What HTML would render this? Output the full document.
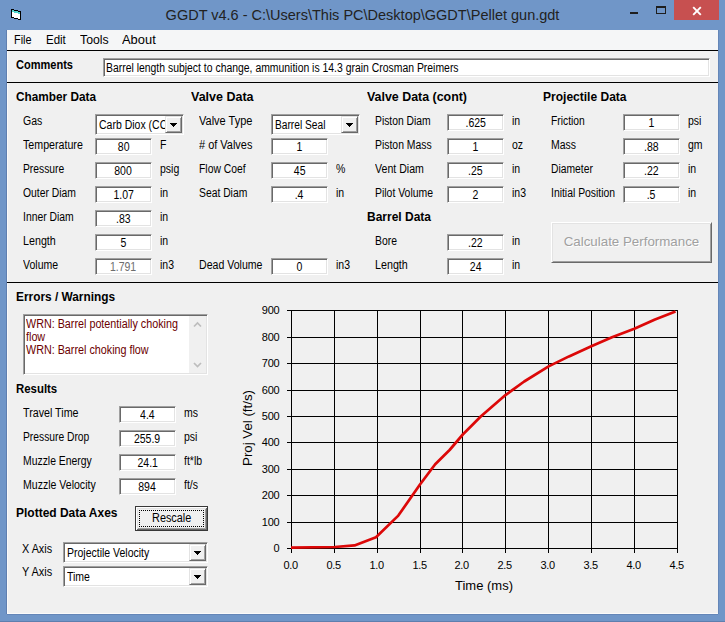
<!DOCTYPE html><html><head><meta charset='utf-8'><title>GGDT v4.6</title><style>
html,body{margin:0;padding:0;}
body{width:725px;height:622px;overflow:hidden;background:#7096c8;position:relative;font-family:"Liberation Sans",sans-serif;font-size:12px;color:#000;}
div,span,i{box-sizing:border-box;}
.a{position:absolute;white-space:nowrap;line-height:14px;transform-origin:0 50%;transform:scaleX(0.875);}
.b{font-weight:bold;}
.s{display:inline-block;transform:scaleX(0.875);transform-origin:50% 50%;white-space:nowrap;}
.sl{display:inline-block;transform:scaleX(0.875);transform-origin:0 50%;white-space:nowrap;}
.client{position:absolute;left:7px;top:30px;width:711px;height:584px;background:#f0f0f0;box-shadow:inset 1px 0 0 #fafafa, inset 0 -1px 0 #fafafa, -1px 0 0 #5f7fb0, 0 1px 0 #6486b8, 1px 0 0 #6486b8;}
.menu{position:absolute;left:0;top:0;width:711px;height:20px;background:#f5f6f7;}
.menu span{position:absolute;top:3px;font-size:12px;line-height:14px;}
.hl{position:absolute;left:0;width:711px;height:1px;background:#000;}
.inp{position:absolute;height:17px;width:57px;background:#fff;border:1px solid;border-color:#a0a0a0 #fff #fff #a0a0a0;box-shadow:inset 1px 1px 0 #696969, inset -1px -1px 0 #e3e3e3;padding:1px;text-align:center;line-height:14px;white-space:nowrap;overflow:hidden;}
.dis{color:#6d6d6d;}
.cmb{position:absolute;height:21px;background:#fff;border:1px solid;border-color:#a0a0a0 #fff #fff #a0a0a0;box-shadow:inset 1px 1px 0 #696969, inset -1px -1px 0 #e3e3e3;line-height:18px;white-space:nowrap;overflow:hidden;padding:1px 0 0 3px;}
.cmb i{position:absolute;right:1px;top:1px;width:17px;bottom:1px;background:#f0f0f0;border:1px solid;border-color:#e3e3e3 #696969 #696969 #e3e3e3;box-shadow:inset 1px 1px 0 #fff, inset -1px -1px 0 #a0a0a0;}
.cmb i svg{position:absolute;left:4px;top:6px;}
.btn{position:absolute;background:#f0f0f0;border:1px solid;border-color:#fff #696969 #696969 #fff;box-shadow:inset 1px 1px 0 #e3e3e3, inset -1px -1px 0 #a0a0a0;text-align:center;white-space:nowrap;}
</style></head><body>
<div style="position:absolute;left:0;top:6px;width:725px;text-align:center;font-size:14.5px;line-height:18px;color:#222;white-space:nowrap">GGDT v4.6 - C:\Users\This PC\Desktop\GGDT\Pellet gun.gdt</div>
<svg style="position:absolute;left:11px;top:9px" width="10" height="11" viewBox="0 0 10 11" shape-rendering="crispEdges"><path d="M0 0h3v1h4v1h3v9h-3v-1h-4v-1h-3z" fill="#000"/><path d="M1 1h2v1h4v1h2v7h-2v-1h-4v-1h-2z" fill="#fff"/><path d="M1 1h2v1h4v1h2v2h-2v-1h-4v-1h-2z" fill="#52d6cf"/></svg>
<div style="position:absolute;left:630px;top:12px;width:8px;height:2px;background:#1e1e1e"></div>
<div style="position:absolute;left:656px;top:6px;width:10px;height:8px;border:1px solid #1e1e1e;border-top-width:2px"></div>
<div style="position:absolute;left:674px;top:0;width:45px;height:20px;background:#c75050"></div>
<svg style="position:absolute;left:692px;top:5.5px" width="10" height="10" viewBox="0 0 10 10"><path d="M1.2 1.2 L8.8 8.8 M8.8 1.2 L1.2 8.8" stroke="#fff" stroke-width="1.9" fill="none"/></svg>
<div style="position:absolute;left:0;top:621px;width:725px;height:1px;background:#5f7fae"></div>
<div class="client">
<div class="menu"><span style="left:7px;transform-origin:0 50%;transform:scaleX(0.905)">File</span><span style="left:39px;transform-origin:0 50%;transform:scaleX(0.958)">Edit</span><span style="left:73px;transform-origin:0 50%;transform:scaleX(1.021)">Tools</span><span style="left:115px;transform-origin:0 50%;transform:scaleX(1.075)">About</span></div>
<div class="hl" style="top:20px"></div>
<div class="hl" style="top:52px"></div>
<div class="hl" style="top:252px"></div>
<div class="a b" style="left:9px;top:28px;transform:scaleX(0.919);">Comments</div>
<div class="inp" style="left:96px;top:28px;width:607px;height:19px;text-align:left;padding:2px 0 0 2.4px"><span class="sl" style="transform:scaleX(.868)">Barrel length subject to change, ammunition is 14.3 grain Crosman Preimers</span></div>
<div class="a b" style="left:9px;top:60px;transform:scaleX(0.983);">Chamber Data</div>
<div class="a b" style="left:184px;top:60px;transform:scaleX(1.041);">Valve Data</div>
<div class="a b" style="left:360px;top:60px;transform:scaleX(1.034);">Valve Data (cont)</div>
<div class="a b" style="left:536px;top:60px;transform:scaleX(1.002);">Projectile Data</div>
<div class="a b" style="left:360px;top:180px;transform:scaleX(1.000);">Barrel Data</div>
<div class="a" style="left:16px;top:84px;transform:scaleX(0.877);">Gas</div>
<div class="a" style="left:16px;top:108px;transform:scaleX(0.888);">Temperature</div>
<div class="inp " style="left:88px;top:108px"><span class="s">80</span></div>
<div class="a" style="left:152.5px;top:108px;">F</div>
<div class="a" style="left:16px;top:132px;transform:scaleX(0.858);">Pressure</div>
<div class="inp " style="left:88px;top:132px"><span class="s">800</span></div>
<div class="a" style="left:152.5px;top:132px;">psig</div>
<div class="a" style="left:16px;top:156px;transform:scaleX(0.864);">Outer Diam</div>
<div class="inp " style="left:88px;top:156px"><span class="s">1.07</span></div>
<div class="a" style="left:152.5px;top:156px;">in</div>
<div class="a" style="left:16px;top:180px;transform:scaleX(0.864);">Inner Diam</div>
<div class="inp " style="left:88px;top:180px"><span class="s">.83</span></div>
<div class="a" style="left:152.5px;top:180px;">in</div>
<div class="a" style="left:16px;top:204px;transform:scaleX(0.894);">Length</div>
<div class="inp " style="left:88px;top:204px"><span class="s">5</span></div>
<div class="a" style="left:152.5px;top:204px;">in</div>
<div class="a" style="left:16px;top:228px;transform:scaleX(0.877);">Volume</div>
<div class="inp dis" style="left:88px;top:228px"><span class="s">1.791</span></div>
<div class="a" style="left:152.5px;top:228px;">in3</div>
<div class="cmb" style="left:88px;top:84px;width:89px"><span class="sl">Carb Diox (CC</span><i><svg width="7" height="4" viewBox="0 0 7 4" shape-rendering="crispEdges"><path d="M0 0h7v1h-1v1h-1v1h-1v1h-1v-1h-1v-1h-1v-1h-1z" fill="#000"/></svg></i></div>
<div class="a" style="left:192px;top:84px;transform:scaleX(0.917);">Valve Type</div>
<div class="a" style="left:192px;top:108px;transform:scaleX(0.913);"># of Valves</div>
<div class="inp " style="left:264px;top:108px"><span class="s">1</span></div>
<div class="a" style="left:192px;top:132px;transform:scaleX(0.863);">Flow Coef</div>
<div class="inp " style="left:264px;top:132px"><span class="s">45</span></div>
<div class="a" style="left:328.5px;top:132px;">%</div>
<div class="a" style="left:192px;top:156px;transform:scaleX(0.862);">Seat Diam</div>
<div class="inp " style="left:264px;top:156px"><span class="s">.4</span></div>
<div class="a" style="left:328.5px;top:156px;">in</div>
<div class="a" style="left:192px;top:228px;transform:scaleX(0.881);">Dead Volume</div>
<div class="inp " style="left:264px;top:228px"><span class="s">0</span></div>
<div class="a" style="left:328.5px;top:228px;">in3</div>
<div class="cmb" style="left:264px;top:84px;width:89px"><span class="sl" style="transform:scaleX(0.850)">Barrel Seal</span><i><svg width="7" height="4" viewBox="0 0 7 4" shape-rendering="crispEdges"><path d="M0 0h7v1h-1v1h-1v1h-1v1h-1v-1h-1v-1h-1v-1h-1z" fill="#000"/></svg></i></div>
<div class="a" style="left:368px;top:84px;transform:scaleX(0.861);">Piston Diam</div>
<div class="inp " style="left:440px;top:84px"><span class="s">.625</span></div>
<div class="a" style="left:504.5px;top:84px;">in</div>
<div class="a" style="left:368px;top:108px;transform:scaleX(0.868);">Piston Mass</div>
<div class="inp " style="left:440px;top:108px"><span class="s">1</span></div>
<div class="a" style="left:504.5px;top:108px;">oz</div>
<div class="a" style="left:368px;top:132px;transform:scaleX(0.883);">Vent Diam</div>
<div class="inp " style="left:440px;top:132px"><span class="s">.25</span></div>
<div class="a" style="left:504.5px;top:132px;">in</div>
<div class="a" style="left:368px;top:156px;transform:scaleX(0.870);">Pilot Volume</div>
<div class="inp " style="left:440px;top:156px"><span class="s">2</span></div>
<div class="a" style="left:504.5px;top:156px;">in3</div>
<div class="a" style="left:368px;top:204px;transform:scaleX(0.864);">Bore</div>
<div class="inp " style="left:440px;top:204px"><span class="s">.22</span></div>
<div class="a" style="left:504.5px;top:204px;">in</div>
<div class="a" style="left:368px;top:228px;transform:scaleX(0.894);">Length</div>
<div class="inp " style="left:440px;top:228px"><span class="s">24</span></div>
<div class="a" style="left:504.5px;top:228px;">in</div>
<div class="a" style="left:544px;top:84px;transform:scaleX(0.857);">Friction</div>
<div class="inp " style="left:616px;top:84px"><span class="s">1</span></div>
<div class="a" style="left:680.5px;top:84px;">psi</div>
<div class="a" style="left:544px;top:108px;transform:scaleX(0.872);">Mass</div>
<div class="inp " style="left:616px;top:108px"><span class="s">.88</span></div>
<div class="a" style="left:680.5px;top:108px;">gm</div>
<div class="a" style="left:544px;top:132px;transform:scaleX(0.859);">Diameter</div>
<div class="inp " style="left:616px;top:132px"><span class="s">.22</span></div>
<div class="a" style="left:680.5px;top:132px;">in</div>
<div class="a" style="left:544px;top:156px;transform:scaleX(0.866);">Initial Position</div>
<div class="inp " style="left:616px;top:156px"><span class="s">.5</span></div>
<div class="a" style="left:680.5px;top:156px;">in</div>
<div class="btn" style="left:544px;top:192px;width:161px;height:41px;font-size:13.33px;line-height:38px;color:#a0a0a0;text-shadow:1px 1px 0 #fff">Calculate Performance</div>
<div class="a b" style="left:9px;top:260px;transform:scaleX(0.988);">Errors / Warnings</div>
<div class="inp" style="left:16px;top:284px;width:185px;height:61px;text-align:left;color:#6c0000;line-height:13px;padding:3px 0 0 2px;"><span class="sl" style="transform:scaleX(.897)">WRN: Barrel potentially choking<br>flow<br>WRN: Barrel choking flow</span>
<svg style="position:absolute;right:1px;top:1px" width="17" height="57" viewBox="0 0 17 57"><rect width="17" height="57" fill="#f0f0f0"/><path d="M5 10.5 L8.5 7 L12 10.5 M5 47 L8.5 50.5 L12 47" stroke="#bdbdbd" stroke-width="1.7" fill="none"/></svg></div>
<div class="a b" style="left:9px;top:352px;transform:scaleX(0.950);">Results</div>
<div class="a" style="left:16px;top:376px;transform:scaleX(0.892);">Travel Time</div>
<div class="inp " style="left:112px;top:376px"><span class="s">4.4</span></div>
<div class="a" style="left:176.5px;top:376px;">ms</div>
<div class="a" style="left:16px;top:400px;transform:scaleX(0.857);">Pressure Drop</div>
<div class="inp " style="left:112px;top:400px"><span class="s">255.9</span></div>
<div class="a" style="left:176.5px;top:400px;">psi</div>
<div class="a" style="left:16px;top:424px;transform:scaleX(0.867);">Muzzle Energy</div>
<div class="inp " style="left:112px;top:424px"><span class="s">24.1</span></div>
<div class="a" style="left:176.5px;top:424px;">ft*lb</div>
<div class="a" style="left:16px;top:448px;transform:scaleX(0.879);">Muzzle Velocity</div>
<div class="inp " style="left:112px;top:448px"><span class="s">894</span></div>
<div class="a" style="left:176.5px;top:448px;">ft/s</div>
<div class="a b" style="left:9px;top:476px;transform:scaleX(0.999);">Plotted Data Axes</div>
<div class="btn" style="left:128px;top:476px;width:73px;height:25px;border:1px solid #383838;box-shadow:inset 1px 1px 0 #fff, inset -1px -1px 0 #696969, inset 2px 2px 0 #e3e3e3, inset -2px -2px 0 #a0a0a0;line-height:22px;"><span class="s" style="transform:scaleX(.905)">Rescale</span><span style="position:absolute;left:3px;top:3px;right:3px;bottom:3px;border:1px dotted #000"></span></div>
<div class="a" style="left:15px;top:512px;transform:scaleX(0.903);">X Axis</div>
<div class="a" style="left:15px;top:535px;transform:scaleX(0.909);">Y Axis</div>
<div class="cmb" style="left:56px;top:512px;width:145px"><span class="sl">Projectile Velocity</span><i><svg width="7" height="4" viewBox="0 0 7 4" shape-rendering="crispEdges"><path d="M0 0h7v1h-1v1h-1v1h-1v1h-1v-1h-1v-1h-1v-1h-1z" fill="#000"/></svg></i></div>
<div class="cmb" style="left:56px;top:536px;width:145px"><span class="sl">Time</span><i><svg width="7" height="4" viewBox="0 0 7 4" shape-rendering="crispEdges"><path d="M0 0h7v1h-1v1h-1v1h-1v1h-1v-1h-1v-1h-1v-1h-1z" fill="#000"/></svg></i></div>
<svg style="position:absolute;left:0;top:0" width="711" height="584" viewBox="7 30 711 584" font-family="Liberation Sans, sans-serif" font-size="11" fill="#000"><path d="M291.5 310 V553 M334.5 310 V553 M377.5 310 V553 M420.5 310 V553 M462.5 310 V553 M505.5 310 V553 M548.5 310 V553 M591.5 310 V553 M634.5 310 V553 M677.5 310 V553 M287 548.5 H678 M287 522.5 H678 M287 495.5 H678 M287 469.5 H678 M287 442.5 H678 M287 416.5 H678 M287 390.5 H678 M287 363.5 H678 M287 337.5 H678 M287 310.5 H678" stroke="#000" stroke-width="1" fill="none" shape-rendering="crispEdges"/><text x="290.7" y="569" text-anchor="middle" letter-spacing="-0.3">0.0</text><text x="333.7" y="569" text-anchor="middle" letter-spacing="-0.3">0.5</text><text x="376.7" y="569" text-anchor="middle" letter-spacing="-0.3">1.0</text><text x="419.7" y="569" text-anchor="middle" letter-spacing="-0.3">1.5</text><text x="461.7" y="569" text-anchor="middle" letter-spacing="-0.3">2.0</text><text x="504.7" y="569" text-anchor="middle" letter-spacing="-0.3">2.5</text><text x="547.7" y="569" text-anchor="middle" letter-spacing="-0.3">3.0</text><text x="590.7" y="569" text-anchor="middle" letter-spacing="-0.3">3.5</text><text x="633.7" y="569" text-anchor="middle" letter-spacing="-0.3">4.0</text><text x="676.7" y="569" text-anchor="middle" letter-spacing="-0.3">4.5</text><text x="279.3" y="552" text-anchor="end" letter-spacing="-0.3">0</text><text x="279.3" y="526" text-anchor="end" letter-spacing="-0.3">100</text><text x="279.3" y="499" text-anchor="end" letter-spacing="-0.3">200</text><text x="279.3" y="473" text-anchor="end" letter-spacing="-0.3">300</text><text x="279.3" y="446" text-anchor="end" letter-spacing="-0.3">400</text><text x="279.3" y="420" text-anchor="end" letter-spacing="-0.3">500</text><text x="279.3" y="394" text-anchor="end" letter-spacing="-0.3">600</text><text x="279.3" y="367" text-anchor="end" letter-spacing="-0.3">700</text><text x="279.3" y="341" text-anchor="end" letter-spacing="-0.3">800</text><text x="279.3" y="314" text-anchor="end" letter-spacing="-0.3">900</text><polyline points="291.0,547.6 334.8,547.0 354.5,545.4 376.0,537.2 398.3,515.6 419.8,484.8 435.2,464.3 449.6,450.0 462.8,434.5 481.0,416.3 505.5,395.1 524.2,381.5 548.6,366.4 569.0,356.4 591.3,346.3 612.0,337.3 634.3,328.7 655.0,319.4 675.5,311.6" fill="none" stroke="#dc0808" stroke-width="2.7" stroke-linejoin="round"/><text x="484" y="590" text-anchor="middle" font-size="13">Time (ms)</text><text transform="translate(252,428) rotate(-90)" text-anchor="middle" font-size="13.25">Proj Vel (ft/s)</text></svg>
</div>
</body></html>
